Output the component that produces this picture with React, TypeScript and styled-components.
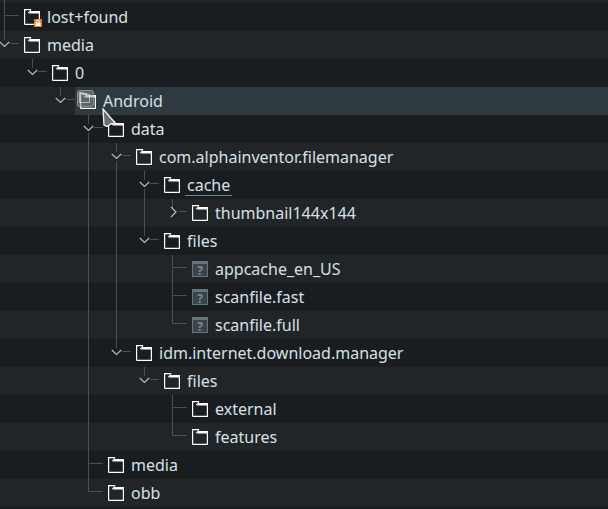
import React from "react";
import styled, { createGlobalStyle } from "styled-components";

const LINE = "#4b4f52";

const GlobalStyle = createGlobalStyle`
  html, body {
    margin: 0;
    padding: 0;
    background: #1a1d20;
    overflow: hidden;
  }
  svg {
    display: block;
  }
`;

const Tree = styled.div`
  width: 608px;
  height: 509px;
  overflow: hidden;
  display: flex;
  flex-direction: column;
  font-family: "Noto Sans", sans-serif;
  font-size: 16px;
  color: #d6e0e6;
`;

const Row = styled.div<{ $alt: boolean }>`
  flex: none;
  height: 28px;
  display: flex;
  padding-left: 4px;
  background: ${(p) => (p.$alt ? "#212528" : "#1a1d20")};
`;

const TopStrip = styled(Row)`
  height: 3px;
  background: #212528;
`;

// one column of the indent, the line always sits on its left edge
const Guide = styled.div<{ $kind: string; $last?: boolean }>`
  flex: none;
  position: relative;
  width: ${(p) => (p.$last ? "20px" : "28px")};

  &::before {
    content: "";
    position: absolute;
    left: 0;
    top: 0;
    width: 1px;
    background: ${LINE};
    height: ${(p) =>
      p.$kind === "pass" || p.$kind === "tee"
        ? "100%"
        : p.$kind === "elbow"
          ? "13px"
          : p.$kind === "none"
            ? "0"
            : "9px"};
  }

  &::after {
    content: "";
    position: absolute;
    display: ${(p) => (p.$last ? "block" : "none")};
    height: 1px;
    top: 12px;
    background: ${LINE};
    left: ${(p) => (p.$kind === "tee" || p.$kind === "elbow" ? "0" : "6px")};
    width: ${(p) => (p.$kind === "tee" || p.$kind === "elbow" ? "15px" : "9px")};
  }
`;

const GuideBelow = styled.span`
  position: absolute;
  left: 0;
  top: 18px;
  bottom: 0;
  width: 1px;
  background: ${LINE};
`;

const ChevronSvg = styled.svg`
  position: absolute;
  left: -5px;
  top: 10px;
  width: 11px;
  height: 8px;
  overflow: visible;
`;

const Entry = styled.div<{ $selected?: boolean }>`
  flex: 1;
  min-width: 0;
  display: flex;
  align-items: center;
  margin-left: -5px;
  padding-left: 5px;
  position: relative;
  background: ${(p) => (p.$selected ? "#2e3a40" : "transparent")};
`;

const IconBox = styled.div`
  position: relative;
  flex: none;
  width: 16px;
  height: 16px;
`;

const Name = styled.span<{ $focused?: boolean }>`
  margin-left: 7px;
  position: relative;
  line-height: 28px;
  white-space: nowrap;

  ${(p) =>
    p.$focused &&
    `&::after {
      content: "";
      position: absolute;
      left: -2px;
      right: -2px;
      bottom: 3px;
      height: 1px;
      background: #5d8798;
    }`}
`;

const LockBadge = styled.div`
  position: absolute;
  left: 10px;
  top: 10px;
  width: 8px;
  height: 8px;
`;

const DragGhost = styled.div`
  position: absolute;
  left: 2px;
  top: 3px;
  width: 15px;
  height: 15px;
  border-radius: 3px;
  background: rgba(140, 145, 148, 0.5);
  border: 1px solid rgba(170, 175, 178, 0.55);
`;

const Cursor = styled.svg`
  position: absolute;
  left: 27px;
  top: 21px;
  width: 16px;
  height: 20px;
  z-index: 2;
`;

const QuestionMark = styled.span`
  position: absolute;
  left: 0;
  right: 0;
  top: 3px;
  text-align: center;
  font-size: 12px;
  line-height: 13px;
  font-weight: 700;
  color: #7f8a91;
`;

const FolderIcon = () => (
  <svg width="16" height="16" viewBox="0 0 16 16" fill="none">
    <path d="M.6 15.4V.6H7M.6 15.4h14.8V4" stroke="#fff" strokeWidth="1.2" />
    <path d="M6.5 2H16v2.4H4.5z" fill="#fff" />
    <path d="M7 .8 4 4" stroke="#fff" strokeWidth=".9" />
  </svg>
);

const GhostFolder = () => (
  <svg width="13" height="13" viewBox="0 0 13 13" fill="none">
    <path d="M1.5 11.5V1.5h4M1.5 11.5h10V3.5h-7" stroke="rgba(255,255,255,.55)" />
  </svg>
);

const UnknownIcon = () => (
  <IconBox>
    <svg width="16" height="16" viewBox="0 0 16 16">
      <rect x=".5" y=".5" width="15" height="15" fill="#3b444b" stroke="#66747e" />
      <rect x="0" y="0" width="16" height="3" fill="#66747e" />
    </svg>
    <QuestionMark>?</QuestionMark>
  </IconBox>
);

const LockIcon = () => (
  <LockBadge>
    <svg width="8" height="8" viewBox="0 0 8 8">
      <rect width="8" height="8" fill="#f2771a" />
      <rect x="1.5" y="3.5" width="5" height="3.5" fill="#fff" />
      <path d="M2.5 3.5V2.6a1.5 1.5 0 0 1 3 0v.9" fill="none" stroke="#fff" strokeWidth="1" />
    </svg>
  </LockBadge>
);

const Chevron = ({ open }: { open: boolean }) => (
  <ChevronSvg viewBox="0 0 11 8" fill="none">
    <path
      d={open ? "M.8 1 5.5 5.5 10.2 1" : "M4 -2 9 3 4 8"}
      stroke="#b4b9bc"
      strokeWidth="1.2"
    />
  </ChevronSvg>
);

type Item = {
  name: string;
  guides: string[];
  icon?: "folder" | "file";
  locked?: boolean;
  selected?: boolean;
  focused?: boolean;
};

// guide kinds: none, pass, tee, elbow, open, openMore, closed
const items: Item[] = [
  { name: "lost+found", guides: ["tee"], locked: true },
  { name: "media", guides: ["open"] },
  { name: "0", guides: ["none", "open"] },
  { name: "Android", guides: ["none", "none", "open"], selected: true },
  { name: "data", guides: ["none", "none", "none", "openMore"] },
  { name: "com.alphainventor.filemanager", guides: ["none", "none", "none", "pass", "openMore"] },
  { name: "cache", guides: ["none", "none", "none", "pass", "pass", "openMore"], focused: true },
  { name: "thumbnail144x144", guides: ["none", "none", "none", "pass", "pass", "pass", "closed"] },
  { name: "files", guides: ["none", "none", "none", "pass", "pass", "open"] },
  { name: "appcache_en_US", guides: ["none", "none", "none", "pass", "pass", "none", "tee"], icon: "file" },
  { name: "scanfile.fast", guides: ["none", "none", "none", "pass", "pass", "none", "tee"], icon: "file" },
  { name: "scanfile.full", guides: ["none", "none", "none", "pass", "pass", "none", "elbow"], icon: "file" },
  { name: "idm.internet.download.manager", guides: ["none", "none", "none", "pass", "open"] },
  { name: "files", guides: ["none", "none", "none", "pass", "none", "open"] },
  { name: "external", guides: ["none", "none", "none", "pass", "none", "none", "tee"] },
  { name: "features", guides: ["none", "none", "none", "pass", "none", "none", "elbow"] },
  { name: "media", guides: ["none", "none", "none", "tee"] },
  { name: "obb", guides: ["none", "none", "none", "elbow"] },
];

const App = () => (
  <>
    <GlobalStyle />
    <Tree>
      <TopStrip $alt>
        <Guide $kind="pass" />
      </TopStrip>
      {items.map((item, i) => (
        <Row key={i} $alt={i % 2 === 1}>
          {item.guides.map((kind, g) => {
            const last = g === item.guides.length - 1;
            return (
              <Guide key={g} $kind={kind} $last={last}>
                {kind === "openMore" && <GuideBelow />}
                {(kind === "open" || kind === "openMore") && <Chevron open />}
                {kind === "closed" && <Chevron open={false} />}
              </Guide>
            );
          })}
          <Entry $selected={item.selected}>
            {item.icon === "file" ? (
              <UnknownIcon />
            ) : (
              <IconBox>
                <FolderIcon />
                {item.locked && <LockIcon />}
              </IconBox>
            )}
            <Name $focused={item.focused}>{item.name}</Name>
            {item.selected && (
              <>
                <DragGhost>
                  <GhostFolder />
                </DragGhost>
                <Cursor viewBox="0 0 16 20">
                  <path
                    d="M1 1 14 16 9.5 15.5 5 18.5 2 17z"
                    fill="#6b6e70"
                    stroke="#f2f2f2"
                    strokeWidth="1.3"
                  />
                </Cursor>
              </>
            )}
          </Entry>
        </Row>
      ))}
    </Tree>
  </>
);

export default App;
